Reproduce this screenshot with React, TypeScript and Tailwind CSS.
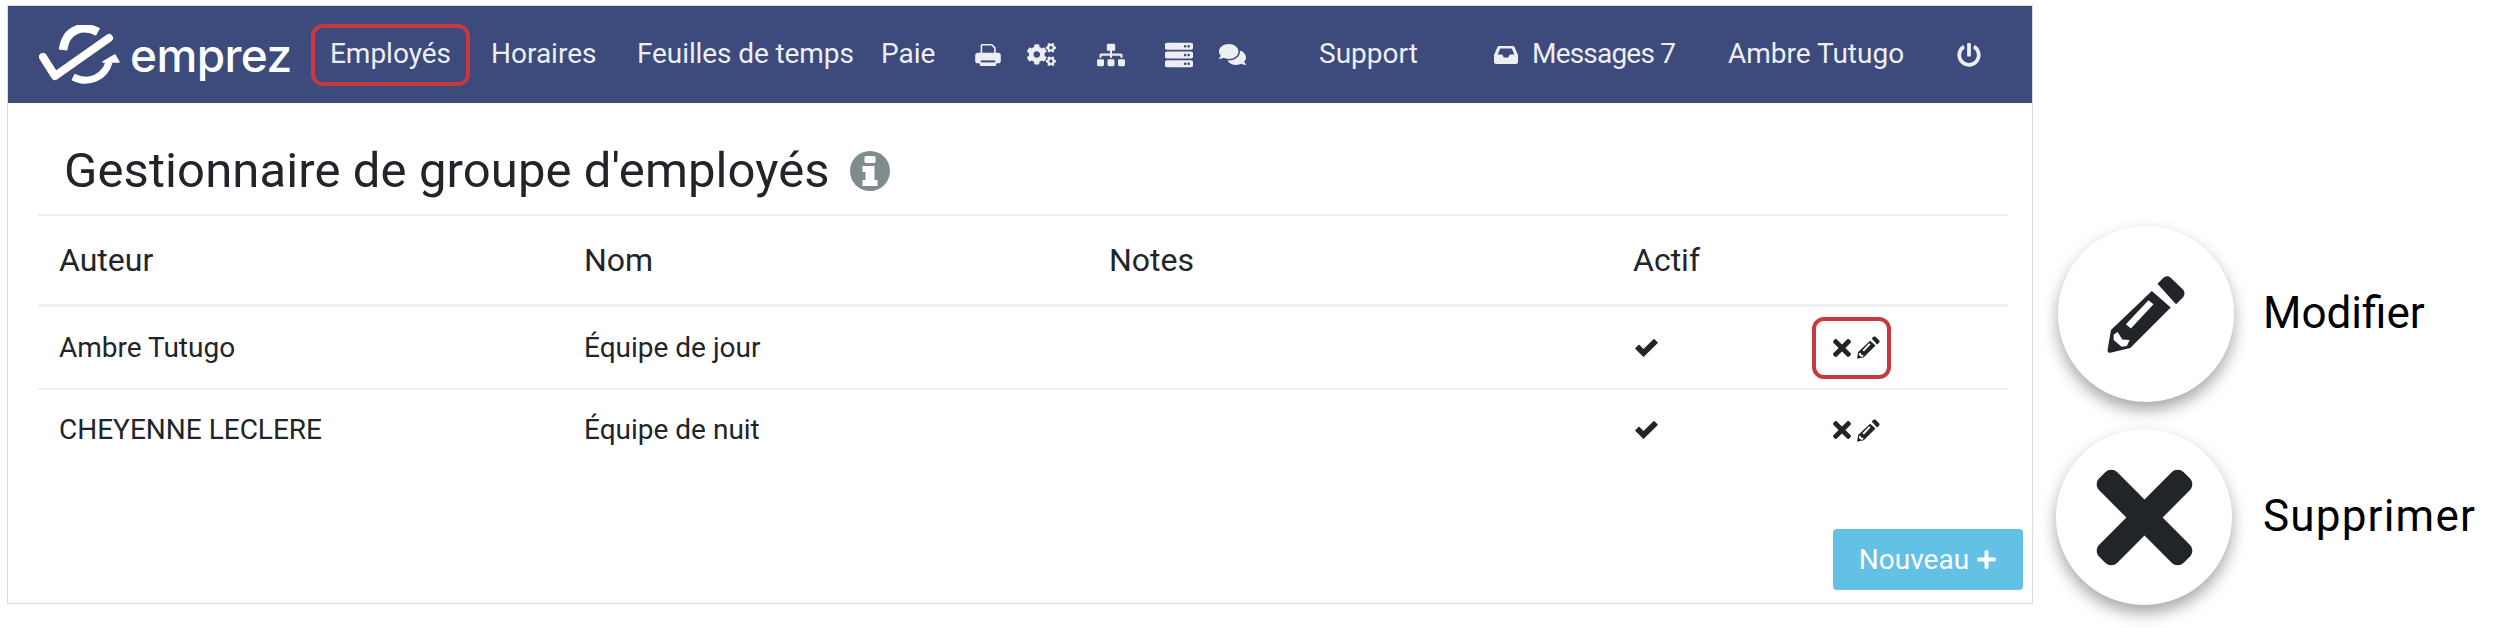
import React from "react";
import { FaCogs, FaComments, FaPlus, FaPowerOff, FaServer, FaSitemap, FaTimes } from "react-icons/fa";

function Pencil({ className }: { className?: string }) {
  return (
    <svg viewBox="40 42 238 238" className={className} fill="currentColor">
      <path
        fillRule="evenodd"
        d="M175 90 L232 140 L110 262 L50 276 Q40 278 42 266 L52 208 Z M165 118 L180 130 L112 203 L97 190 Z M60 222 L72 214 L86 236 L108 238 L100 256 L84 258 L60 238 Z"
      />
      <path d="M192 68 L210 50 Q222 42 232 50 L268 85 Q278 95 270 108 L248 130 Z" />
    </svg>
  );
}

function Check({ className }: { className?: string }) {
  return (
    <svg viewBox="0 0 23 18" className={className} fill="currentColor" stroke="currentColor" strokeWidth="1.5" strokeLinejoin="round">
      <path d="M1 9.5 L4 6.5 L8.5 11 L19 0.8 L22 3.8 L8.5 17 Z" />
    </svg>
  );
}

function Logo() {
  return (
    <svg viewBox="0 0 82 60" className="h-[60px] w-[82px]" fill="none" stroke="white">
      <path d="M4 32 L16 51 L70 13" strokeWidth="8" strokeLinecap="round" strokeLinejoin="round" />
      <path d="M59 7 C46 0 27 2 24 25" strokeWidth="8.5" />
      <path d="M34 52 C50 60 66 52 70 37" strokeWidth="7" />
      <path d="M64 37 L76 30 L80 37 Z" fill="white" strokeWidth="1.5" strokeLinejoin="round" />
    </svg>
  );
}

function Printer() {
  return (
    <svg viewBox="0 0 78 67" className="w-[26px] h-[22px]">
      <path d="M19 2 H50 L60 12 V28 M19 2 V28" fill="none" stroke="#eceef4" strokeWidth="5" />
      <rect x="0" y="27" width="78" height="32" rx="8" fill="#eceef4" />
      <rect x="14" y="46" width="50" height="21" rx="3" fill="#eceef4" />
      <rect x="17" y="50" width="44" height="6" fill="#3c4a7c" />
    </svg>
  );
}

function Inbox() {
  return (
    <svg viewBox="0 0 24 19" className="w-[24px] h-[19px]" fill="#eceef4">
      <path d="M5 1 H19 Q20 1 20.5 2 L24 10 V17 Q24 19 22 19 H2 Q0 19 0 17 V10 L3.5 2 Q4 1 5 1 Z" />
      <path d="M6.2 3.5 H17.8 L20.3 9.5 H15.7 L14.2 12.5 H9.8 L8.3 9.5 H3.7 Z" fill="#3c4a7c" />
    </svg>
  );
}

function Info() {
  return (
    <svg viewBox="0 0 40 40" className="w-[40px] h-[40px]">
      <circle cx="20" cy="20" r="20" fill="#7f8c8d" />
      <rect x="14.5" y="5" width="11" height="7" rx="1.5" fill="white" />
      <path d="M12.5 15 H24.5 V29 H27.5 V35 H12.5 V29 H15.5 V21 H12.5 Z" fill="white" />
    </svg>
  );
}

const navText = "text-[28px] leading-none text-[#eceef4] whitespace-nowrap pb-[2px]";
const rows = [
  ["Ambre Tutugo", "Équipe de jour", true],
  ["CHEYENNE LECLERE", "Équipe de nuit", false],
] as const;

export default function App() {
  return (
    <div className="h-[628px] w-[2496px] overflow-hidden bg-white font-['Roboto',sans-serif] text-[#212529] flex items-start pt-[5px] pl-[7px]">
      <div className="w-[2026px] h-[599px] border border-[#dcdcdc] flex flex-col">
        <nav className="h-[97px] bg-[#3c4a7c] flex items-center">
          <div className="ml-[31px] flex items-center w-[272px]">
            <Logo />
            <span className="ml-[9px] font-['Inter',sans-serif] text-[46px] font-medium leading-none tracking-[-0.6px] text-white">emprez</span>
          </div>
          <div className={`${navText} border-4 border-[#c8393f] rounded-xl h-[62px] w-[159px] flex items-center justify-center`}>Employés</div>
          <span className={`${navText} ml-[21px] w-[146px]`}>Horaires</span>
          <span className={`${navText} w-[244px] tracking-[-0.1px]`}>Feuilles de temps</span>
          <span className={`${navText} w-[94px]`}>Paie</span>
          <Printer />
          <FaCogs className="text-[29px] text-[#eceef4] ml-[26px]" />
          <FaSitemap className="text-[28px] text-[#eceef4] ml-[41px]" />
          <FaServer className="text-[28px] text-[#eceef4] ml-[40px]" />
          <FaComments className="text-[27px] text-[#eceef4] ml-[26px]" />
          <span className={`${navText} ml-[73px] w-[175px]`}>Support</span>
          <Inbox />
          <span className={`${navText} ml-[14px] w-[196px] tracking-[-0.8px]`}>Messages 7</span>
          <span className={`${navText} w-[229px]`}>Ambre Tutugo</span>
          <FaPowerOff className="text-[24px] text-[#eceef4]" />
        </nav>
        <div className="flex-1 flex flex-col pl-[30px] pr-[24px]">
          <div className="h-[113px] border-b-2 border-[#efefef] flex items-center pl-[26px] pt-[24px] gap-[20px]">
            <h1 className="text-[49px] leading-none tracking-[0.1px]">Gestionnaire de groupe d'employés</h1>
            <Info />
          </div>
          <div className="grid grid-cols-[525px_525px_524px_1fr] h-[91px] items-center border-b-[3px] border-[#efefef] pl-[21px] text-[32px]">
            <span>Auteur</span>
            <span>Nom</span>
            <span>Notes</span>
            <span>Actif</span>
          </div>
          {rows.map((r, i) => (
            <div
              key={r[0]}
              className={`grid grid-cols-[525px_525px_524px_179px_1fr] items-center pl-[21px] text-[28px] ${i === 0 ? "h-[83px] border-b-2 border-[#efefef]" : "h-[80px]"}`}
            >
              <span>{r[0]}</span>
              <span>{r[1]}</span>
              <span />
              <Check className="w-[23px] h-[18px] ml-[2px]" />
              <div className={`flex items-center justify-center gap-[6px] w-[79px] h-[62px] pl-[9px] ${r[2] ? "border-4 border-[#c8393f] rounded-xl" : ""}`}>
                <FaTimes className="text-[26px] w-[18px]" />
                <Pencil className="w-[23px] h-[23px]" />
              </div>
            </div>
          ))}
          <div className="flex-1 flex items-end justify-end pb-[13px] -mr-[15px]">
            <button className="w-[190px] h-[61px] bg-[#64c1e6] rounded-[4px] text-white text-[28px] flex items-center justify-center gap-[7px]">
              Nouveau <FaPlus className="text-[21px]" />
            </button>
          </div>
        </div>
      </div>
      <div className="ml-[23px] mt-[221px] flex flex-col gap-[27px]">
        <div className="flex items-center ml-[2px]">
          <div className="w-[176px] h-[176px] rounded-full bg-white shadow-[0_8px_16px_rgba(0,0,0,0.35)] flex items-center justify-center">
            <Pencil className="w-[79px] h-[79px] text-[#212529]" />
          </div>
          <span className="ml-[29px] text-[44px] leading-none text-black pb-[2px]">Modifier</span>
        </div>
        <div className="flex items-center">
          <div className="w-[176px] h-[176px] rounded-full bg-white shadow-[0_8px_16px_rgba(0,0,0,0.35)] flex items-center justify-center">
            <FaTimes className="text-[139px] text-[#212529]" />
          </div>
          <span className="ml-[31px] text-[44px] leading-none text-black tracking-[1.2px] pb-[2px]">Supprimer</span>
        </div>
      </div>
    </div>
  );
}
